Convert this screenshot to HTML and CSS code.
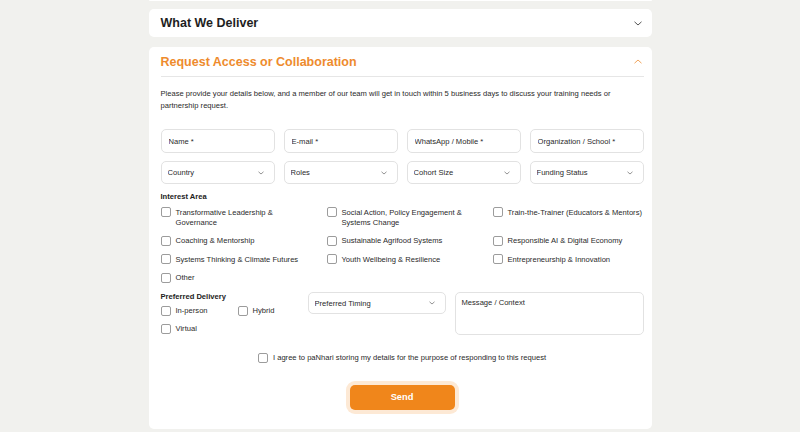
FILE: index.html
```html
<!DOCTYPE html>
<html lang="en">
<head>
  <meta charset="UTF-8">
  <meta name="viewport" content="width=device-width, initial-scale=1.0">
  <title>Request Access or Collaboration</title>
  <link rel="stylesheet" href="styles.css">
</head>
<body>

<div class="page">
  <div class="card card-stub"></div>

  <section class="card acc">
    <div class="acc-head">
      <h2>What We Deliver</h2>
      <svg class="chev" width="8" height="5" viewBox="0 0 8 5"><path d="M0.5 0.8 L4 4 L7.5 0.8" fill="none" stroke="#555" stroke-width="1"/></svg>
    </div>
  </section>

  <section class="card acc open">
    <div class="acc-head">
      <h2 class="orange">Request Access or Collaboration</h2>
      <svg class="chev" width="8" height="5" viewBox="0 0 8 5"><path d="M0.5 4.2 L4 1 L7.5 4.2" fill="none" stroke="#f0a45c" stroke-width="1"/></svg>
    </div>

    <div class="acc-body">
      <p class="intro">Please provide your details below, and a member of our team will get in touch within 5 business days to discuss your training needs or partnership request.</p>

      <form id="requestForm">
        <div class="row4">
          <input class="field" type="text" placeholder="Name *">
          <input class="field" type="email" placeholder="E-mail *">
          <input class="field" type="text" placeholder="WhatsApp / Mobile *">
          <input class="field" type="text" placeholder="Organization / School *">
        </div>

        <div class="row4 selects">
          <div class="select-wrap">
            <select class="field"><option>Country</option></select>
            <svg class="sel-chev" width="6" height="4" viewBox="0 0 6 4"><path d="M0.5 0.8 L3 3 L5.5 0.8" fill="none" stroke="#888" stroke-width="0.9"/></svg>
          </div>
          <div class="select-wrap">
            <select class="field"><option>Roles</option></select>
            <svg class="sel-chev" width="6" height="4" viewBox="0 0 6 4"><path d="M0.5 0.8 L3 3 L5.5 0.8" fill="none" stroke="#888" stroke-width="0.9"/></svg>
          </div>
          <div class="select-wrap">
            <select class="field"><option>Cohort Size</option></select>
            <svg class="sel-chev" width="6" height="4" viewBox="0 0 6 4"><path d="M0.5 0.8 L3 3 L5.5 0.8" fill="none" stroke="#888" stroke-width="0.9"/></svg>
          </div>
          <div class="select-wrap">
            <select class="field"><option>Funding Status</option></select>
            <svg class="sel-chev" width="6" height="4" viewBox="0 0 6 4"><path d="M0.5 0.8 L3 3 L5.5 0.8" fill="none" stroke="#888" stroke-width="0.9"/></svg>
          </div>
        </div>

        <div class="group-label">Interest Area</div>
        <div class="checks">
          <label class="check"><input type="checkbox"><span>Transformative Leadership &amp; Governance</span></label>
          <label class="check"><input type="checkbox"><span>Social Action, Policy Engagement &amp; Systems Change</span></label>
          <label class="check"><input type="checkbox"><span>Train-the-Trainer (Educators &amp; Mentors)</span></label>
          <label class="check"><input type="checkbox"><span>Coaching &amp; Mentorship</span></label>
          <label class="check"><input type="checkbox"><span>Sustainable Agrifood Systems</span></label>
          <label class="check"><input type="checkbox"><span>Responsible AI &amp; Digital Economy</span></label>
          <label class="check"><input type="checkbox"><span>Systems Thinking &amp; Climate Futures</span></label>
          <label class="check"><input type="checkbox"><span>Youth Wellbeing &amp; Resilience</span></label>
          <label class="check"><input type="checkbox"><span>Entrepreneurship &amp; Innovation</span></label>
          <label class="check"><input type="checkbox"><span>Other</span></label>
        </div>

        <div class="delivery">
          <div>
            <div class="group-label">Preferred Delivery</div>
            <div class="delivery-checks">
              <label class="check"><input type="checkbox"><span>In-person</span></label>
              <label class="check"><input type="checkbox"><span>Hybrid</span></label>
              <label class="check"><input type="checkbox"><span>Virtual</span></label>
            </div>
          </div>
          <div class="select-wrap timing">
            <select class="field"><option>Preferred Timing</option></select>
            <svg class="sel-chev" width="6" height="4" viewBox="0 0 6 4"><path d="M0.5 0.8 L3 3 L5.5 0.8" fill="none" stroke="#888" stroke-width="0.9"/></svg>
          </div>
          <textarea class="field message" placeholder="Message / Context"></textarea>
        </div>

        <label class="check consent"><input type="checkbox"><span>I agree to paNhari storing my details for the purpose of responding to this request</span></label>

        <div class="send-wrap">
          <button type="button" class="send">Send</button>
        </div>
      </form>
    </div>
  </section>
</div>

</body>
</html>
```

FILE: styles.css
```css
body {
  margin: 0;
  background-color: #f1f1ee;
  font-family: "Liberation Sans", Arial, sans-serif;
  color: #222;
}

.page {
  width: 503px;
  margin: 0 auto;
  display: flex;
  flex-direction: column;
  gap: 8px;
}

.card {
  background: #fff;
  border-radius: 5px;
}

.card-stub {
  height: 1px;
  border-radius: 0 0 5px 5px;
}

.acc-head {
  height: 28px;
  display: flex;
  align-items: center;
  justify-content: space-between;
  padding: 0 10px 0 12px;
}

h2 {
  margin: 0;
  font-size: 12.5px;
  font-weight: 700;
  color: #1e1e1e;
}

h2.orange {
  color: #ee8b2d;
}

.chev {
  display: block;
}

.open {
  margin-top: 2px;
}

.open .acc-head {
  height: 29px;
  margin: 0 8px 0 12px;
  padding: 0 2px 0 0;
  border-bottom: 1px solid #e6e6e6;
}

.acc-body {
  padding: 11px 8px 19px 12px;
}

.intro {
  margin: 0 0 17px;
  font-size: 7.6px;
  line-height: 12px;
  color: #2a2a2a;
}

.row4 {
  display: grid;
  grid-template-columns: repeat(4, 1fr);
  gap: 9px;
  margin-bottom: 8px;
}

.field {
  width: 100%;
  height: 24px;
  box-sizing: border-box;
  margin: 0;
  padding: 0 7px;
  border: 1px solid #e2e2e2;
  border-radius: 5px;
  background: #fff;
  font-family: inherit;
  font-size: 7.6px;
  color: #2a2a2a;
  outline: none;
}

.field::placeholder {
  color: #2a2a2a;
}

.selects .field {
  height: 23px;
}

select.field {
  appearance: none;
  -webkit-appearance: none;
  padding-left: 6px;
}

.select-wrap {
  position: relative;
}

.sel-chev {
  position: absolute;
  right: 11px;
  top: 50%;
  margin-top: -2px;
  pointer-events: none;
}

.group-label {
  font-size: 7.6px;
  line-height: 10px;
  font-weight: 700;
  margin-bottom: 5px;
}

.checks {
  display: grid;
  grid-template-columns: repeat(3, 1fr);
  column-gap: 15px;
  row-gap: 7.5px;
}

.check {
  display: flex;
  align-items: flex-start;
  gap: 5px;
  font-size: 7.6px;
  line-height: 10.4px;
  color: #2a2a2a;
}

.check input {
  appearance: none;
  -webkit-appearance: none;
  flex: none;
  width: 10px;
  height: 10px;
  margin: 0;
  border: 1px solid #9c9c9c;
  border-radius: 2px;
  background: #fff;
}

.check span {
  padding-top: 0.5px;
}

.delivery {
  display: grid;
  grid-template-columns: 138px 138px 1fr;
  gap: 9px;
  margin-top: 8px;
  align-items: start;
}

.delivery .group-label {
  margin-bottom: 4px;
}

.delivery-checks {
  display: grid;
  grid-template-columns: 77px auto;
  row-gap: 7.5px;
}

.timing .field {
  height: 22px;
}

.message {
  height: 43px;
  padding: 5px 6px;
  resize: none;
}

.consent {
  justify-content: center;
  align-items: center;
  margin-top: 18px;
}

.send-wrap {
  display: flex;
  justify-content: center;
  margin-top: 21px;
}

.send {
  width: 105px;
  height: 25px;
  border: none;
  border-radius: 5px;
  background-color: #f0861b;
  color: #fff;
  font-family: inherit;
  font-size: 9.3px;
  font-weight: 700;
  box-shadow: 0 0 0 4px #fde9d5;
  cursor: pointer;
}
```
